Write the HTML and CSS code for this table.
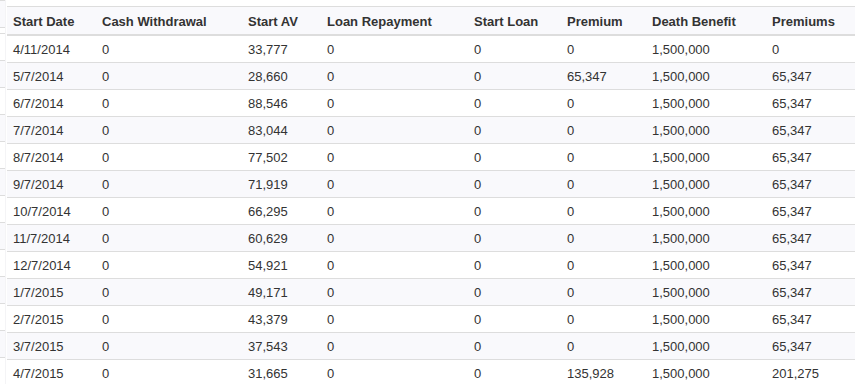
FILE: index.html
```html
<!DOCTYPE html>
<html>
<head>
<meta charset="utf-8">
<link rel="stylesheet" href="styles.css">
</head>
<body>
<div class="wrap">
  <div class="edge"></div>
  <table class="grid">
    <colgroup>
      <col class="c1"><col class="c2"><col class="c3"><col class="c4"><col class="c5"><col class="c6"><col class="c7"><col class="c8">
    </colgroup>
    <thead>
      <tr><th>Start Date</th><th>Cash Withdrawal</th><th>Start AV</th><th>Loan Repayment</th><th>Start Loan</th><th>Premium</th><th>Death Benefit</th><th>Premiums</th></tr>
    </thead>
    <tbody>
      <tr><td>4/11/2014</td><td>0</td><td>33,777</td><td>0</td><td>0</td><td>0</td><td>1,500,000</td><td>0</td></tr>
      <tr><td>5/7/2014</td><td>0</td><td>28,660</td><td>0</td><td>0</td><td>65,347</td><td>1,500,000</td><td>65,347</td></tr>
      <tr><td>6/7/2014</td><td>0</td><td>88,546</td><td>0</td><td>0</td><td>0</td><td>1,500,000</td><td>65,347</td></tr>
      <tr><td>7/7/2014</td><td>0</td><td>83,044</td><td>0</td><td>0</td><td>0</td><td>1,500,000</td><td>65,347</td></tr>
      <tr><td>8/7/2014</td><td>0</td><td>77,502</td><td>0</td><td>0</td><td>0</td><td>1,500,000</td><td>65,347</td></tr>
      <tr><td>9/7/2014</td><td>0</td><td>71,919</td><td>0</td><td>0</td><td>0</td><td>1,500,000</td><td>65,347</td></tr>
      <tr><td>10/7/2014</td><td>0</td><td>66,295</td><td>0</td><td>0</td><td>0</td><td>1,500,000</td><td>65,347</td></tr>
      <tr><td>11/7/2014</td><td>0</td><td>60,629</td><td>0</td><td>0</td><td>0</td><td>1,500,000</td><td>65,347</td></tr>
      <tr><td>12/7/2014</td><td>0</td><td>54,921</td><td>0</td><td>0</td><td>0</td><td>1,500,000</td><td>65,347</td></tr>
      <tr><td>1/7/2015</td><td>0</td><td>49,171</td><td>0</td><td>0</td><td>0</td><td>1,500,000</td><td>65,347</td></tr>
      <tr><td>2/7/2015</td><td>0</td><td>43,379</td><td>0</td><td>0</td><td>0</td><td>1,500,000</td><td>65,347</td></tr>
      <tr><td>3/7/2015</td><td>0</td><td>37,543</td><td>0</td><td>0</td><td>0</td><td>1,500,000</td><td>65,347</td></tr>
      <tr><td>4/7/2015</td><td>0</td><td>31,665</td><td>0</td><td>0</td><td>135,928</td><td>1,500,000</td><td>201,275</td></tr>
    </tbody>
  </table>
</div>
</body>
</html>
```

FILE: styles.css
```css
html, body {
  margin: 0;
  padding: 0;
  background: #ffffff;
}
body {
  font-family: "Liberation Sans", Arial, sans-serif;
  font-size: 13px;
  color: #333333;
  overflow: hidden;
}
.wrap {
  display: flex;
  gap: 1px;
  width: 855px;
}
.edge {
  width: 6px;
  flex: none;
  background:
    repeating-linear-gradient(to bottom,
      #dddddd 0, #dddddd 1px,
      #ffffff 1px, #ffffff 27px,
      #dddddd 27px, #dddddd 28px,
      #f9f9fc 28px, #f9f9fc 54px);
  background-position: 0 33px;
  background-color: #f9f9fc;
  height: 384px;
  border-right: 1px solid #f4f4f6;
  box-sizing: border-box;
}
.grid {
  margin-top: 6px;
  width: 848px;
  table-layout: fixed;
  border-collapse: collapse;
  border-spacing: 0;
  border-top: 1px solid #dddddd;
}
.c1 { width: 89px; }
.c2 { width: 146px; }
.c3 { width: 79px; }
.c4 { width: 147px; }
.c5 { width: 93px; }
.c6 { width: 85px; }
.c7 { width: 120px; }
.c8 { width: 89px; }
.grid th, .grid td {
  text-align: left;
  padding: 0 6px;
  white-space: nowrap;
}
.grid th {
  height: 26px;
  font-weight: bold;
  background: #f9f9fc;
  border-bottom: 2px solid #dddddd;
  padding-top: 1px;
}
.grid td {
  height: 26px;
  border-top: 1px solid #dddddd;
}
.grid tbody tr:first-child td {
  border-top: none;
}
.grid tbody tr:nth-child(even) td {
  background: #f9f9fc;
}
```
